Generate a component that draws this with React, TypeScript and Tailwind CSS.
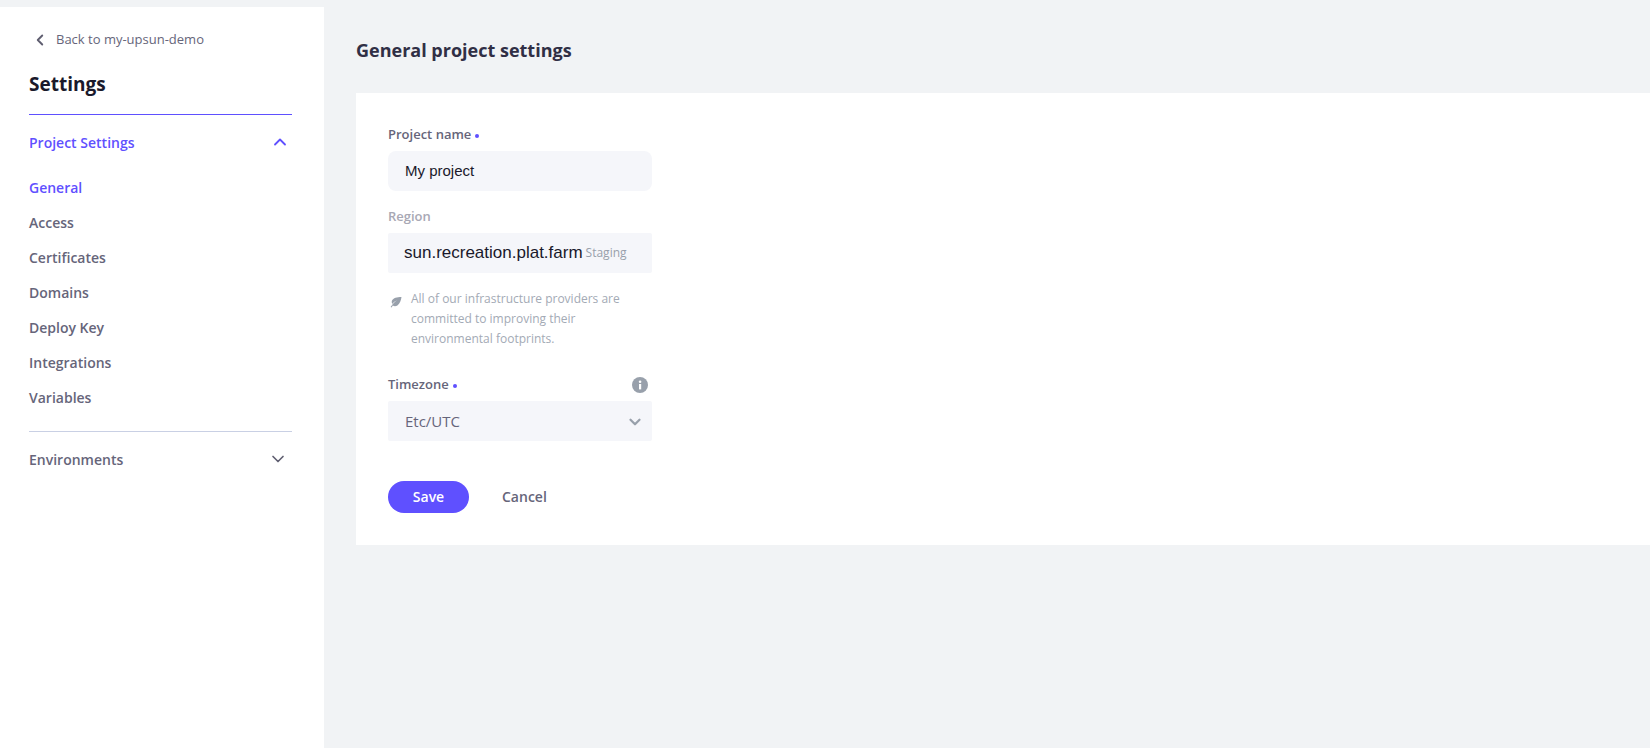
import React from 'react';
import { ChevronLeft, ChevronUp, ChevronDown } from 'lucide-react';

const items = ['General', 'Access', 'Certificates', 'Domains', 'Deploy Key', 'Integrations', 'Variables'];

const Dot = () => <span className="ml-[4px] inline-block w-[4px] h-[4px] rounded-full bg-[#5f50ff] align-middle" />;

const Sidebar: React.FC = () => (
    <aside className="w-[324px] flex-shrink-0 bg-white pl-[29px] pr-[32px]">
        {/* Back link */}
        <div className="flex items-center h-[20px] mt-[23px] text-[13px] text-[#66657a]">
            <ChevronLeft className="w-[18px] h-[18px] ml-[2px] mr-[7px] text-[#5f5e70]" strokeWidth={2.5} />
            <span>Back to my-upsun-demo</span>
        </div>
        <h1 className="mt-[20px] h-[28px] leading-[28px] text-[19px] font-bold text-[#1a192b]">Settings</h1>
        <div className="mt-[16px] h-px bg-[#5f50ff]" />

        {/* Project settings */}
        <div className="mt-[17px] h-[20px] flex items-center justify-between text-[14px] font-semibold text-[#5f50ff]">
            <span>Project Settings</span>
            <ChevronUp className="w-[20px] h-[20px] mr-[2px]" strokeWidth={2.2} />
        </div>
        <nav className="mt-[26px] flex flex-col gap-[15px]">
            {items.map((item, i) => (
                <a key={item} className={`h-[20px] leading-[20px] text-[14px] font-semibold ${i === 0 ? 'text-[#5f50ff]' : 'text-[#66657a]'}`}>
                    {item}
                </a>
            ))}
        </nav>
        <div className="mt-[23px] h-px bg-[#c9d0e4]" />
        <div className="mt-[17px] h-[20px] flex items-center justify-between text-[14px] font-semibold text-[#66657a]">
            <span>Environments</span>
            <ChevronDown className="w-[20px] h-[20px] mr-[4px] text-[#5f5e70]" strokeWidth={2} />
        </div>
    </aside>
);

const LeafIcon = () => (
    <svg viewBox="0 0 12 12" className="w-[12px] h-[12px] ml-[2px] mt-[7px] flex-shrink-0 text-[#98a0ab]" fill="currentColor">
        <path d="M11.5 1C7 1.2 3.2 1.8 2 4.6c-.5 1.2-.3 2.4.3 3.4C3.5 6.2 5.2 5 7.4 4.2 5.2 5.4 2.8 7.4.6 11l1 .5 1.2-1.9c1.4.8 3.2.8 4.6-.2C10 7.600 11 4.500 11.500 1z" />
    </svg>
);

const GeneralForm: React.FC = () => (
    <section className="bg-white h-[452px] pt-[31px] pl-[32px]">
        <div className="w-[264px]">
            <label className="block h-[20px] leading-[20px] text-[13px] font-semibold text-[#66657a]">
                Project name
                <Dot />
            </label>
            <div className="mt-[7px] h-[40px] rounded-[8px] bg-[#f5f6fa] pl-[17px] flex items-center text-[15px] text-[#1a192b] font-['Liberation_Sans',sans-serif]">
                My project
            </div>

            <label className="block mt-[15px] h-[20px] leading-[20px] text-[13px] font-semibold text-[#a8a8b4]">Region</label>
            <div className="mt-[7px] h-[40px] rounded-[2px] bg-[#f5f6fa] pl-[16px] flex items-center whitespace-nowrap">
                <span className="text-[17px] text-[#1a192b] font-['Liberation_Sans',sans-serif]">sun.recreation.plat.farm</span>
                <span className="ml-[3px] text-[12px] text-[#98a0ab]">Staging</span>
            </div>

            <div className="mt-[16px] flex gap-[9px] text-[12px] leading-[20px] text-[#a3aab5]">
                <LeafIcon />
                <p>
                    All of our infrastructure providers are
                    <br />
                    committed to improving their
                    <br />
                    environmental footprints.
                </p>
            </div>

            <div className="mt-[24px] h-[24px] flex items-center justify-between">
                <label className="text-[13px] font-semibold text-[#66657a]">
                    Timezone
                    <Dot />
                </label>
                <svg viewBox="0 0 16 16" className="w-[16px] h-[16px] mr-[4px] text-[#98a0ab]">
                    <circle cx="8" cy="8" r="8" fill="currentColor" />
                    <rect x="7" y="7" width="2.2" height="5.4" fill="#fff" />
                    <circle cx="8.1" cy="4.700" r="1.300" fill="#fff" />
                </svg>
            </div>
            <div className="mt-[4px] h-[40px] rounded-[2px] bg-[#f5f6fa] pt-[1px] pl-[17px] pr-[8px] flex items-center justify-between text-[15px] text-[#66657a]">
                <span>Etc/UTC</span>
                <ChevronDown className="w-[18px] h-[18px] text-[#98a0ab]" strokeWidth={3} />
            </div>

            <div className="mt-[40px] flex items-center">
                <button className="w-[81px] h-[32px] rounded-full bg-[#5f50ff] pb-[1px] text-white text-[14px] font-semibold">Save</button>
                <button className="ml-[33px] pb-[1px] text-[14px] font-semibold text-[#66657a]">Cancel</button>
            </div>
        </div>
    </section>
);

export default function App() {
    return (
        <div className="h-[748px] bg-[#f1f3f5] pt-[7px] flex font-['Open_Sans',sans-serif] overflow-hidden">
            <Sidebar />
            <main className="flex-1 pl-[32px]">
                <h2 className="mt-[31px] h-[24px] leading-[24px] text-[18px] font-bold text-[#302f45]">General project settings</h2>
                <div className="mt-[31px]">
                    <GeneralForm />
                </div>
            </main>
        </div>
    );
}
